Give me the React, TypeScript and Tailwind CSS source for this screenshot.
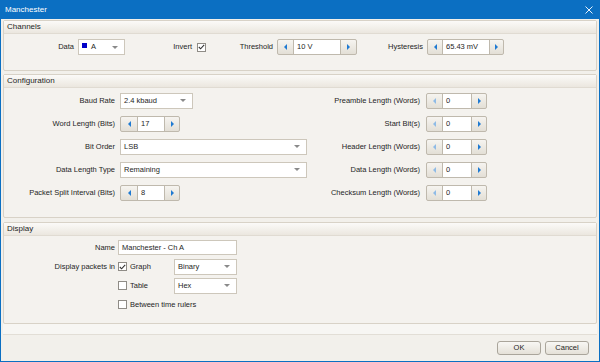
import React from "react";

const Tri: React.FC<{ dir: "left" | "right" | "down"; color: string }> = ({ dir, color }) => {
  if (dir === "down")
    return (
      <svg width="6" height="3" viewBox="0 0 6 3">
        <path d="M0 0 H6 L3 3 Z" fill={color} />
      </svg>
    );
  return (
    <svg width="3" height="6" viewBox="0 0 3 6">
      <path d={dir === "left" ? "M3 0 V6 L0 3 Z" : "M0 0 V6 L3 3 Z"} fill={color} />
    </svg>
  );
};

const Spinner: React.FC<{ value: string; lw: string; fw: string; rw: string; dim?: boolean }> = ({
  value,
  lw,
  fw,
  rw,
  dim,
}) => (
  <div className="flex h-[16px] border border-[#bfb9ad] rounded-[2px] bg-gradient-to-b from-[#f6f4f0] to-[#e3dfd6]">
    <div className={`${lw} flex items-center justify-center`}>
      <Tri dir="left" color={dim ? "#8fbbe6" : "#1f7ad2"} />
    </div>
    <div className={`${fw} bg-white border-x border-[#bfb9ad] flex items-center pl-[3px]`}>{value}</div>
    <div className={`${rw} flex items-center justify-center`}>
      <Tri dir="right" color="#1f7ad2" />
    </div>
  </div>
);

const Combo: React.FC<{ value: string; w: string; swatch?: boolean }> = ({ value, w, swatch }) => (
  <div className={`${w} h-[16px] bg-white border border-[#cdc7bb] flex items-center pl-[3px] pr-[6px]`}>
    {swatch && <div className="w-[5px] h-[5px] bg-[#0000c8] mr-[4px] -mt-[3px]" />}
    <span className="flex-1">{value}</span>
    <Tri dir="down" color="#8a8a8a" />
  </div>
);

const Check: React.FC<{ checked?: boolean }> = ({ checked }) => (
  <div className="w-[9px] h-[9px] bg-white border border-[#8f8c86] flex items-center justify-center">
    {checked && (
      <svg width="7" height="6" viewBox="0 0 7 6">
        <path d="M0.8 3 L2.6 4.8 L6.2 0.8" fill="none" stroke="#333" strokeWidth="1.1" />
      </svg>
    )}
  </div>
);

const Section: React.FC<{ title: string; className: string; children: React.ReactNode }> = ({
  title,
  className,
  children,
}) => (
  <div className={`border border-[#d8d2c7] rounded-[2px] bg-[#f4f2ee] flex flex-col ${className}`}>
    <div className="h-[13px] flex items-center pl-[3px] bg-gradient-to-b from-[#fbfaf8] to-[#ebe7df] border-b border-[#e0dbd2] text-[8px]">
      {title}
    </div>
    {children}
  </div>
);

const Row: React.FC<{ label: string; children: React.ReactNode; rlabel: string; rvalue: string }> = ({
  label,
  children,
  rlabel,
  rvalue,
}) => (
  <div className="h-[23px] flex items-center">
    <div className="w-[111px] text-right">{label}</div>
    <div className="w-[195px] pl-[5px] flex">{children}</div>
    <div className="w-[110px] text-right">{rlabel}</div>
    <div className="pl-[6px]">
      <Spinner value={rvalue} lw="w-[15px]" fw="w-[30px]" rw="w-[14px]" dim />
    </div>
  </div>
);

export default function App() {
  return (
    <div className="w-[600px] h-[362px] bg-[#0b6fc2] flex flex-col px-[1px] pb-[1px] font-['Liberation_Sans',Arial,sans-serif] text-[7.5px] text-[#1e1e1e] overflow-hidden">
      <div className="h-[19px] flex items-center justify-between pl-[4px] pr-[6px] text-white text-[8px]">
        <span>Manchester</span>
        <svg width="8" height="8" viewBox="0 0 8 8">
          <path d="M0.5 0.5 L7.5 7.5 M7.5 0.5 L0.5 7.5" stroke="#e6f0fa" strokeWidth="1" />
        </svg>
      </div>
      <div className="flex-1 bg-[#f2f0eb] flex flex-col px-[2px] pt-[1px]">
        <Section title="Channels" className="h-[51px]">
          <div className="flex items-center h-[16px] mt-[5px]">
            <div className="w-[70px] text-right">Data</div>
            <div className="ml-[4px]">
              <Combo value="A" w="w-[47px]" swatch />
            </div>
            <div className="w-[67px] text-right">Invert</div>
            <div className="ml-[5px]">
              <Check checked />
            </div>
            <div className="w-[67px] text-right">Threshold</div>
            <div className="ml-[4px]">
              <Spinner value="10 V" lw="w-[15px]" fw="w-[48px]" rw="w-[15px]" />
            </div>
            <div className="w-[66px] text-right">Hysteresis</div>
            <div className="ml-[4px]">
              <Spinner value="65.43 mV" lw="w-[14px]" fw="w-[48px]" rw="w-[13px]" />
            </div>
          </div>
        </Section>
        <Section title="Configuration" className="h-[144px] mt-[3px]">
          <div className="pt-[1px]">
            <Row label="Baud Rate" rlabel="Preamble Length (Words)" rvalue="0">
              <Combo value="2.4 kbaud" w="w-[73px]" />
            </Row>
            <Row label="Word Length (Bits)" rlabel="Start Bit(s)" rvalue="0">
              <Spinner value="17" lw="w-[16px]" fw="w-[28px]" rw="w-[14px]" />
            </Row>
            <Row label="Bit Order" rlabel="Header Length (Words)" rvalue="0">
              <Combo value="LSB" w="w-[187px]" />
            </Row>
            <Row label="Data Length Type" rlabel="Data Length (Words)" rvalue="0">
              <Combo value="Remaining" w="w-[187px]" />
            </Row>
            <Row label="Packet Split Interval (Bits)" rlabel="Checksum Length (Words)" rvalue="0">
              <Spinner value="8" lw="w-[16px]" fw="w-[28px]" rw="w-[14px]" />
            </Row>
          </div>
        </Section>
        <Section title="Display" className="h-[102px] mt-[4px]">
          <div className="pt-[2px]">
            <div className="h-[19px] flex items-center">
              <div className="w-[111px] text-right">Name</div>
              <div className="ml-[3px] w-[119px] h-[15px] bg-white border border-[#cdc7bb] flex items-center pl-[3px]">
                Manchester - Ch A
              </div>
            </div>
            <div className="h-[19px] flex items-center">
              <div className="w-[111px] text-right">Display packets in</div>
              <div className="ml-[3px] w-[56px] flex items-center gap-[3px]">
                <Check checked />
                <span>Graph</span>
              </div>
              <Combo value="Binary" w="w-[63px]" />
            </div>
            <div className="h-[19px] flex items-center">
              <div className="w-[111px]" />
              <div className="ml-[3px] w-[56px] flex items-center gap-[3px]">
                <Check />
                <span>Table</span>
              </div>
              <Combo value="Hex" w="w-[63px]" />
            </div>
            <div className="h-[19px] flex items-center">
              <div className="w-[111px]" />
              <div className="ml-[3px] flex items-center gap-[3px]">
                <Check />
                <span>Between time rulers</span>
              </div>
            </div>
          </div>
        </Section>
        <div className="h-[11px] bg-[#f7f6f3] border-b border-[#e2ded6]" />
        <div className="flex-1 flex items-center justify-end gap-[4px] pr-[8px]">
          <button className="w-[44px] h-[14px] rounded-[3px] border border-[#aaa59b] bg-gradient-to-b from-[#f8f7f4] to-[#e5e1d8] text-[7.5px]">
            OK
          </button>
          <button className="w-[44px] h-[14px] rounded-[3px] border border-[#aaa59b] bg-gradient-to-b from-[#f8f7f4] to-[#e5e1d8] text-[7.5px]">
            Cancel
          </button>
        </div>
      </div>
    </div>
  );
}
